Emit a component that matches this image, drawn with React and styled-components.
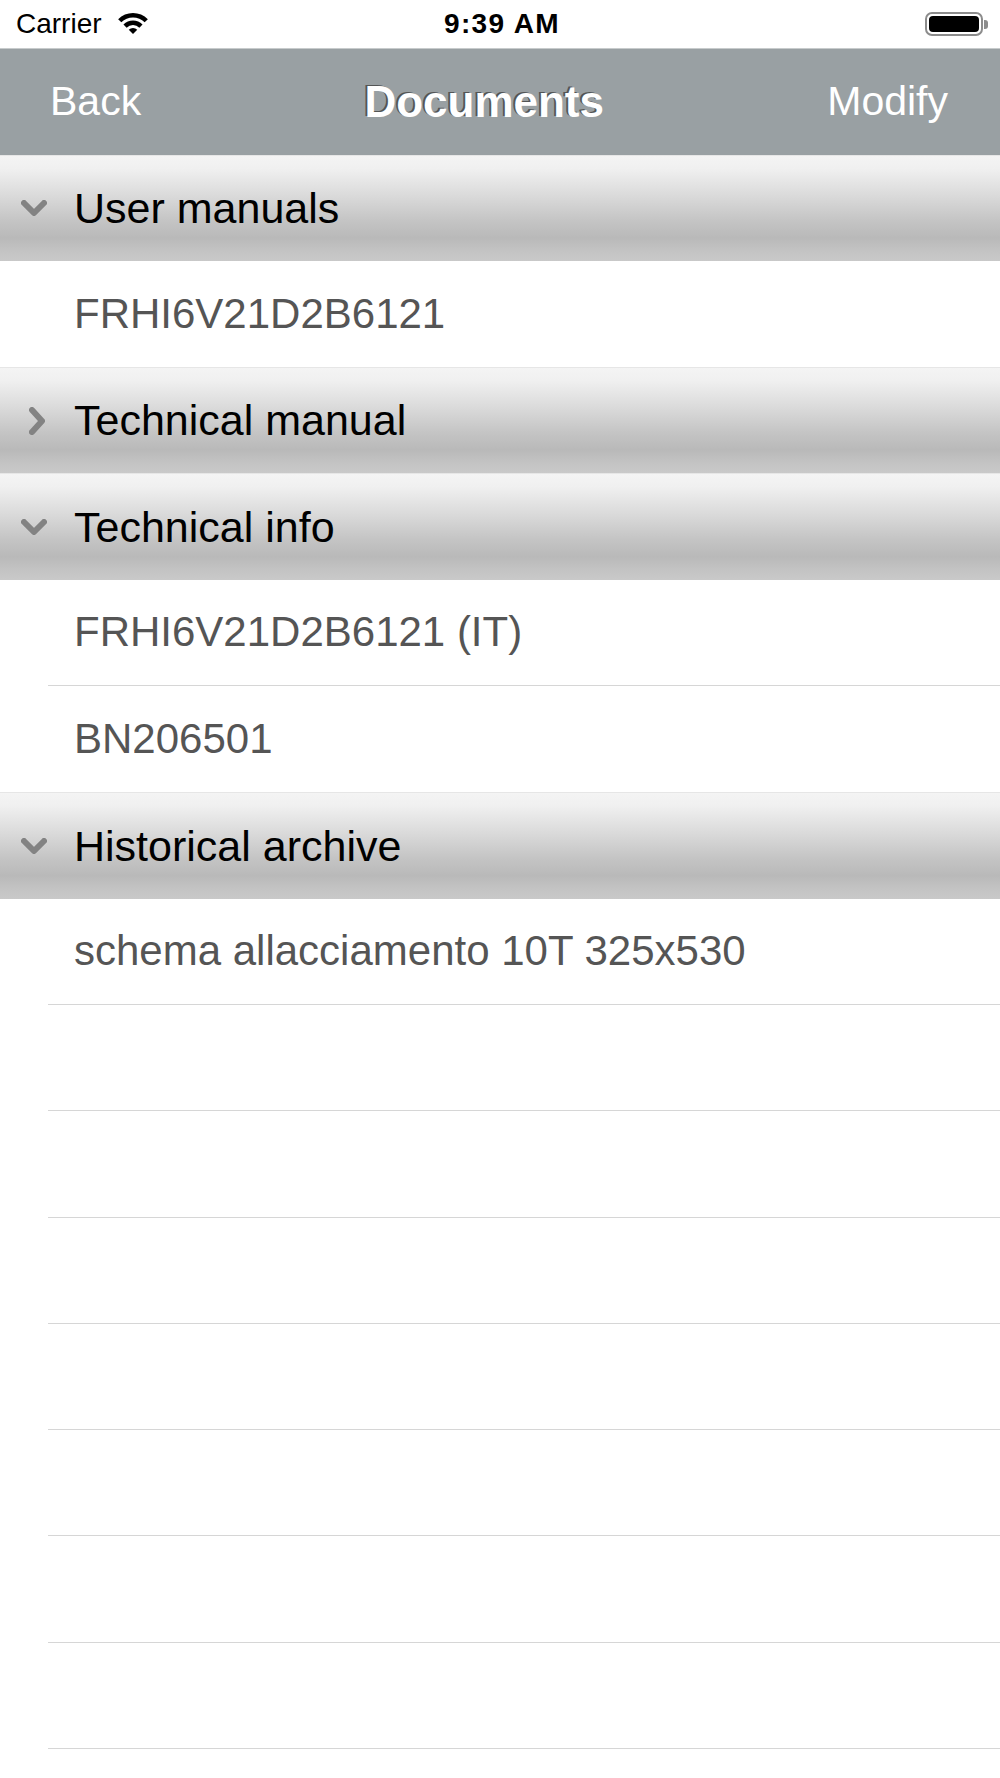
import React from "react";
import styled, { createGlobalStyle } from "styled-components";

const GlobalStyle = createGlobalStyle`
  html, body {
    margin: 0;
    padding: 0;
    background: #fff;
  }
  body {
    font-family: "Liberation Sans", Arial, sans-serif;
  }
`;

const ROW = 106.3;

const Screen = styled.div`
  width: 1000px;
  height: 1778px;
  overflow: hidden;
  display: flex;
  flex-direction: column;
  background: #fff;
`;

const StatusBar = styled.div`
  height: 48.3px;
  flex-shrink: 0;
  display: grid;
  grid-template-columns: 1fr auto 1fr;
  align-items: center;
  padding: 0 12px 0 16px;
  box-sizing: border-box;
  color: #000;
`;

const Carrier = styled.div`
  display: flex;
  align-items: center;
  gap: 15px;
  font-size: 28px;
  line-height: 1;
`;

const Clock = styled.div`
  font-size: 28px;
  font-weight: 700;
  letter-spacing: 1.4px;
  line-height: 1;
`;

const Battery = styled.div`
  justify-self: end;
  display: flex;
  align-items: center;
`;

const BatteryBody = styled.div`
  width: 58px;
  height: 24px;
  box-sizing: border-box;
  border: 2px solid #8c8c8c;
  border-radius: 7px;
  padding: 2px;
  display: flex;
`;

const BatteryFill = styled.div`
  flex: 1;
  background: #000;
  border-radius: 4px;
`;

const BatteryNub = styled.div`
  width: 4px;
  height: 9px;
  margin-left: 1px;
  background: #8c8c8c;
  border-radius: 0 3px 3px 0;
`;

const NavBar = styled.div`
  height: ${ROW}px;
  flex-shrink: 0;
  box-sizing: border-box;
  border-top: 1px solid #c7cbcc;
  background: #99a0a3;
  display: flex;
  align-items: center;
  padding: 0 52px 0 50px;
`;

const NavButton = styled.div`
  color: #fff;
  font-size: 41px;
  line-height: 1;
`;

const NavTitle = styled.div`
  flex: 1;
  text-align: center;
  color: #fff;
  font-size: 44px;
  font-weight: 700;
  line-height: 1;
  text-shadow: -2px -1px 0 rgba(60, 60, 60, 0.75);
`;

const SectionHeader = styled.div`
  height: ${ROW}px;
  flex-shrink: 0;
  box-sizing: border-box;
  border-top: 1px solid #e6e6e6;
  background: linear-gradient(
    #f4f4f4 0%,
    #f0f0f0 12%,
    #dadada 38%,
    #c4c4c4 62%,
    #b9b9b9 78%,
    #c3c3c3 90%,
    #c9c9c9 100%
  );
  display: flex;
  align-items: center;
  padding-left: 20px;
  gap: 26px;
`;

const ChevronBox = styled.div`
  width: 28px;
  height: 34px;
  display: flex;
  align-items: center;
  justify-content: center;
  filter: blur(0.7px);
`;

const HeaderTitle = styled.div`
  color: #000;
  font-size: 43px;
  line-height: 1;
`;

const ItemRow = styled.div`
  height: ${ROW}px;
  flex-shrink: 0;
  display: flex;
  padding-left: 48px;
  background: #fff;
`;

const ItemInner = styled.div`
  flex: 1;
  display: flex;
  align-items: center;
  box-sizing: border-box;
  padding-left: 26px;
  border-bottom: ${({ $divider }) => ($divider ? "1.5px solid #d6d6d6" : "none")};
`;

const ItemText = styled.div`
  color: #555;
  font-size: 42px;
  line-height: 1;
`;

const WifiIcon = () => (
  <svg width="32" height="24" viewBox="0 0 32 24" fill="#000">
    <path d="M1.15 7.15 A21 21 0 0 1 30.85 7.15 L27.67 10.33 A16.5 16.5 0 0 0 4.33 10.33 Z" />
    <path d="M6.45 12.45 A13.5 13.5 0 0 1 25.55 12.45 L22.36 15.64 A9 9 0 0 0 9.64 15.64 Z" />
    <path d="M11.76 17.76 A6 6 0 0 1 20.24 17.76 L16 22 Z" />
  </svg>
);

const Chevron = ({ open }) =>
  open ? (
    <svg width="28" height="20" viewBox="0 0 28 20">
      <path d="M4 5 L14 15 L24 5" fill="none" stroke="#838383" strokeWidth="6" strokeLinecap="round" strokeLinejoin="round" />
    </svg>
  ) : (
    <svg width="22" height="32" viewBox="0 0 22 32" style={{ marginLeft: 6 }}>
      <path d="M6 5 L16 16 L6 27" fill="none" stroke="#838383" strokeWidth="6" strokeLinecap="round" strokeLinejoin="round" />
    </svg>
  );

const sections = [
  { title: "User manuals", open: true, items: ["FRHI6V21D2B6121"] },
  { title: "Technical manual", open: false, items: [] },
  { title: "Technical info", open: true, items: ["FRHI6V21D2B6121 (IT)", "BN206501"] },
  { title: "Historical archive", open: true, items: ["schema allacciamento 10T 325x530"] },
];

const App = () => {
  const lastSection = sections.length - 1;
  return (
    <>
      <GlobalStyle />
      <Screen>
        <StatusBar>
          <Carrier>
            Carrier
            <WifiIcon />
          </Carrier>
          <Clock>9:39 AM</Clock>
          <Battery>
            <BatteryBody>
              <BatteryFill />
            </BatteryBody>
            <BatteryNub />
          </Battery>
        </StatusBar>
        <NavBar>
          <NavButton>Back</NavButton>
          <NavTitle>Documents</NavTitle>
          <NavButton>Modify</NavButton>
        </NavBar>
        {sections.map((section, si) => (
          <React.Fragment key={section.title}>
            <SectionHeader>
              <ChevronBox>
                <Chevron open={section.open} />
              </ChevronBox>
              <HeaderTitle>{section.title}</HeaderTitle>
            </SectionHeader>
            {section.open &&
              section.items.map((item, ii) => {
                const lastItem = ii === section.items.length - 1;
                return (
                  <ItemRow key={item}>
                    <ItemInner $divider={!lastItem || si === lastSection}>
                      <ItemText>{item}</ItemText>
                    </ItemInner>
                  </ItemRow>
                );
              })}
          </React.Fragment>
        ))}
        {Array.from({ length: 8 }).map((_, i) => (
          <ItemRow key={"empty" + i}>
            <ItemInner $divider />
          </ItemRow>
        ))}
      </Screen>
    </>
  );
};

export default App;
